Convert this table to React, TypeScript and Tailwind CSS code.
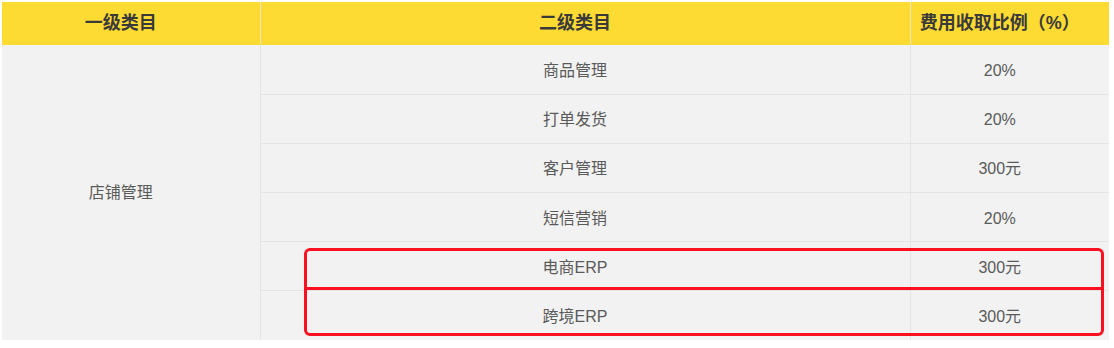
import React from "react";

// =========================
// Data
// =========================
const rows = [
  { name: "商品管理", fee: "20%" },
  { name: "打单发货", fee: "20%" },
  { name: "客户管理", fee: "300元" },
  { name: "短信营销", fee: "20%" },
  { name: "电商ERP", fee: "300元" },
  { name: "跨境ERP", fee: "300元" },
];

const font = {
  fontFamily: '"Liberation Sans", "Noto Sans CJK SC", sans-serif',
};

// =========================
// Main Page
// =========================
export default function App() {
  return (
    <div className="w-[1114px] h-[348px] bg-white pt-[2px] pl-[2px]" style={font}>
      <div className="relative w-[1107px]">
        <table className="w-full border-collapse table-fixed">
          <colgroup>
            <col className="w-[258px]" />
            <col className="w-[650px]" />
            <col />
          </colgroup>
          <thead>
            <tr className="h-[43px] bg-[#fedb33] text-[18px] font-bold text-[#3a3a3a]">
              <th className="pr-[20px] border-r border-[#ece6c0]">一级类目</th>
              <th className="pr-[20px] border-r border-[#ece6c0]">二级类目</th>
              <th className="pr-[20px]">费用收取比例（%）</th>
            </tr>
          </thead>
          <tbody className="bg-[#f2f2f2] text-[16px] text-[#5a5a5a]">
            {rows.map((r, i) => (
              <tr key={r.name} className="h-[49.2px]">
                {i === 0 && (
                  <td
                    rowSpan={6}
                    className="text-center pr-[20px] border-r border-[#e3e3e8]"
                  >
                    店铺管理
                  </td>
                )}
                <td
                  className={`text-center pt-[3px] pr-[20px] border-r border-[#e3e3e8] ${
                    i < rows.length - 1 ? "border-b" : ""
                  }`}
                >
                  {r.name}
                </td>
                <td
                  className={`text-center pt-[3px] pr-[20px] border-[#e3e3e8] ${
                    i < rows.length - 1 ? "border-b" : ""
                  }`}
                >
                  {r.fee}
                </td>
              </tr>
            ))}
          </tbody>
        </table>

        {/* Red highlight around the ERP rows */}
        <div className="absolute left-[302px] top-[246px] w-[800px] h-[88px] border-[3px] border-[#ff1020] rounded-[6px] pointer-events-none">
          <div className="mt-[36px] h-[3px] bg-[#ff1020]" />
        </div>
      </div>
    </div>
  );
}
